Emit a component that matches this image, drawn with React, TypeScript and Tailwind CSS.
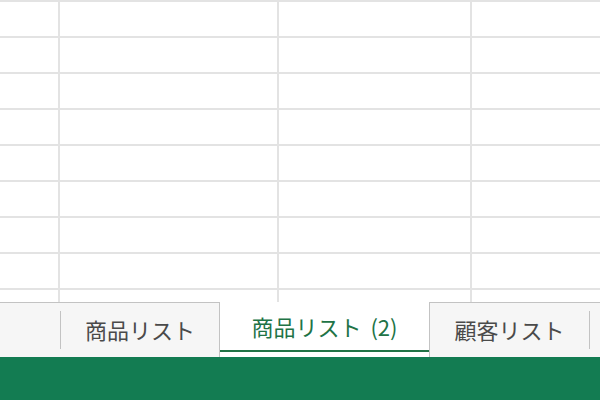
import React from "react";

const cols = ["w-[60px]", "w-[219px]", "w-[193px]", "flex-1"];

export default function App() {
  const rows = Array.from({ length: 9 });
  return (
    <div className="w-[600px] h-[400px] overflow-hidden bg-white flex flex-col" style={{ fontFamily: '"Noto Sans CJK JP", "Noto Sans", sans-serif' }}>
      <div className="h-[302px] overflow-hidden flex flex-col shrink-0">
        {rows.map((_, r) => (
          <div key={r} className="flex h-[36px] shrink-0">
            {cols.map((c, i) => (
              <div key={i} className={`${c} shrink-0 border-t-2 ${i < 3 ? "border-r-2" : ""} border-[#e3e3e3]`} />
            ))}
          </div>
        ))}
      </div>
      <div className="h-[55px] shrink-0 flex bg-[#f6f6f6]">
        <div className="w-[61px] border-t border-[#c3c3c3] flex items-center justify-end">
          <div className="w-px h-[38px] bg-[#c3c3c3]" />
        </div>
        <div className="w-[158px] border-t border-[#c3c3c3] flex items-center justify-center pb-[2px] text-[22px] text-[#4a4a4a]">
          商品リスト
        </div>
        <div className="w-[211px] bg-white border-x border-[#c3c3c3] flex flex-col">
          <div className="flex-1 flex items-center justify-center pt-[1px] text-[22px] text-[#217346] [word-spacing:4px]">
            商品リスト (2)
          </div>
          <div className="h-[2px] bg-[#217346] mb-[5px]" />
        </div>
        <div className="w-[159px] border-t border-[#c3c3c3] flex items-center justify-center pb-[2px] text-[22px] text-[#4a4a4a]">
          顧客リスト
        </div>
        <div className="flex-1 border-t border-[#c3c3c3] flex items-center">
          <div className="w-px h-[38px] bg-[#c3c3c3]" />
        </div>
      </div>
      <div className="flex-1 bg-[#137c52]" />
    </div>
  );
}
